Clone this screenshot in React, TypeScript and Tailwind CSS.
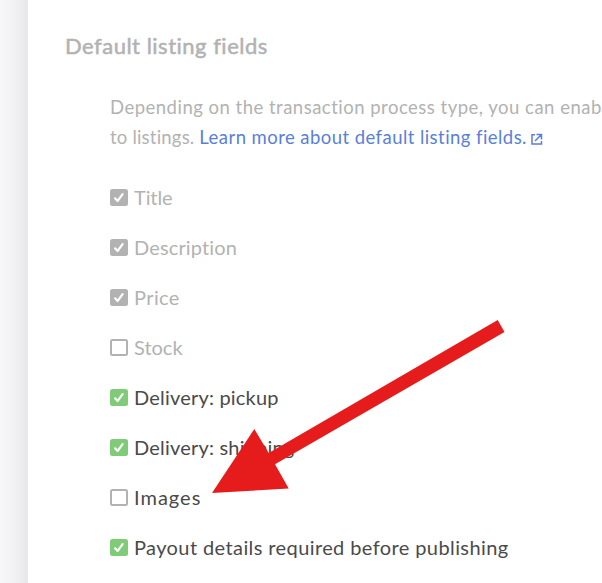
import React from 'react';
import clsx from 'clsx';

type Field = {
    label: string;
    checked: boolean;
    disabled: boolean;
    tracking: string;
};

const fields: Field[] = [
    { label: 'Title', checked: true, disabled: true, tracking: 'tracking-[-0.1px]' },
    { label: 'Description', checked: true, disabled: true, tracking: 'tracking-[0.15px]' },
    { label: 'Price', checked: true, disabled: true, tracking: 'tracking-[0.4px]' },
    { label: 'Stock', checked: false, disabled: true, tracking: 'tracking-[0px]' },
    { label: 'Delivery: pickup', checked: true, disabled: false, tracking: 'tracking-[0.2px]' },
    { label: 'Delivery: shipping', checked: true, disabled: false, tracking: 'tracking-[0.2px]' },
    { label: 'Images', checked: false, disabled: false, tracking: 'tracking-[1px]' },
    { label: 'Payout details required before publishing', checked: true, disabled: false, tracking: 'tracking-[0.4px]' },
];

function CheckBox({ checked, disabled }: { checked: boolean; disabled: boolean }) {
    return (
        <span
            className={clsx(
                'flex h-[17px] w-[17.5px] shrink-0 items-center justify-center rounded-[2.5px]',
                !checked && 'border-2 border-[#b2b2b2] bg-white',
                checked && disabled && 'bg-[#b2b2b2]',
                checked && !disabled && 'bg-[#7fcb78]'
            )}
        >
            {checked && (
                <svg width="18" height="17" viewBox="0 0 18 17" fill="none">
                    <path
                        d="M5.2 9.3L7.8 12.1L13 5"
                        stroke="white"
                        strokeWidth="2.2"
                        strokeLinecap="round"
                        strokeLinejoin="round"
                    />
                </svg>
            )}
        </span>
    );
}

function FieldRow({ field }: { field: Field }) {
    return (
        <label className="flex h-[50px] items-center gap-[6.5px]">
            <CheckBox checked={field.checked} disabled={field.disabled} />
            <span
                className={clsx(
                    'whitespace-nowrap text-[20px] leading-[30px]',
                    field.tracking,
                    field.disabled ? 'text-[#b2b2b2]' : 'text-[#4a4a4a]'
                )}
            >
                {field.label}
            </span>
        </label>
    );
}

function ExternalIcon() {
    return (
        <svg className="ml-1 inline-block align-[-1px]" width="12" height="12" viewBox="0 0 12 12" fill="none">
            <path
                d="M4 1.75H1V11H10.5V8M5.5 1.5H10.5V6.5M10.5 1.5L4 8"
                stroke="#5a7fd8"
                strokeWidth="1.5"
            />
        </svg>
    );
}

function Arrow() {
    return (
        <svg
            className="pointer-events-none absolute left-0 top-0"
            width="602"
            height="583"
            viewBox="0 0 602 583"
        >
            <path d="M212 493L254.3 429L268.7 453L497.7 320L504.5 332L275 464.3L288.7 488.5Z" fill="#e61c1c" />
        </svg>
    );
}

function App() {
    return (
        <div className="relative flex h-[583px] w-[602px] overflow-hidden bg-white font-['Lato',sans-serif]">
            <div className="w-7 shrink-0 bg-linear-to-r from-[#f7f7f9] via-[#f2f2f4] to-[#e7e7e9]" />
            <main className="min-w-0 flex-1 pl-[37px] pt-[31px]">
                <h2 className="text-[22px] font-normal leading-[30px] tracking-[0.5px] text-[#b2b2b2] [-webkit-text-stroke:0.5px_#b2b2b2]">
                    Default listing fields
                </h2>
                <div className="pl-[45px] pt-[31px]">
                    <p className="whitespace-nowrap text-[18.5px] leading-[30px] text-[#b2b2b2]">
                        <span className="tracking-[0.49px]">
                            Depending on the transaction process type, you can enab
                        </span>
                        <br />
                        <span className="tracking-[0.2px]">to listings. </span>
                        <a className="tracking-[0.44px] text-[#5a7fd8]">
                            Learn more about default listing fields.
                            <ExternalIcon />
                        </a>
                    </p>
                    <div className="pt-5">
                        {fields.map((field) => (
                            <FieldRow key={field.label} field={field} />
                        ))}
                    </div>
                </div>
            </main>
            <Arrow />
        </div>
    );
}

export default App;
